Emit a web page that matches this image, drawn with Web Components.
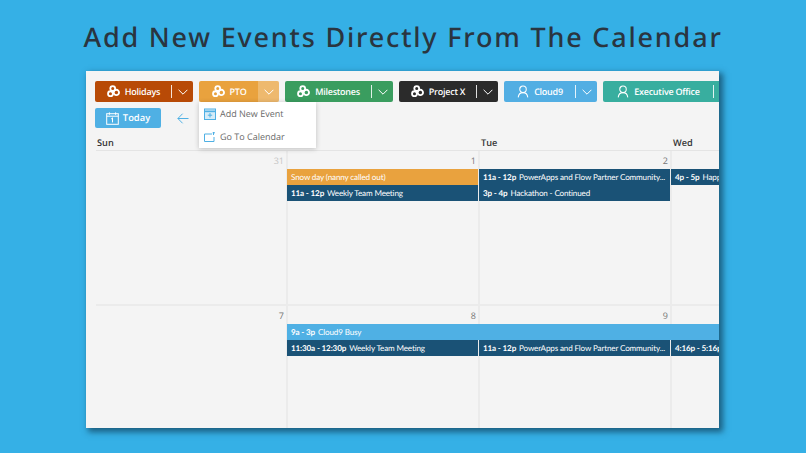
<!DOCTYPE html>
<html>
<head>
<meta charset="utf-8">
<title>Calendar</title>
<style>
  html, body { margin: 0; padding: 0; height: 100%; overflow: hidden; background: #35b0e6; }
  body { font-family: "Open Sans", sans-serif; text-rendering: geometricPrecision; }
</style>
</head>
<body>
<cal-slide heading="Add New Events Directly From The Calendar">
  <cal-toolbar>
    <split-button color="#b84a06" icon="group" style="width:98px" label="Holidays"></split-button>
    <split-button color="#e9a23e" icon="group" style="width:80px" label="PTO" open>
      <action-menu slot="menu">
        <menu-item icon="add">Add New Event</menu-item>
        <menu-item icon="go">Go To Calendar</menu-item>
      </action-menu>
    </split-button>
    <split-button color="#3a9d5f" icon="group" style="width:108px" label="Milestones"></split-button>
    <split-button color="#2b2b2b" icon="group" style="width:99px" label="Project X"></split-button>
    <split-button color="#52aee3" icon="person" style="width:93px" label="Cloud9"></split-button>
    <split-button color="#38ae9f" icon="person" style="width:132px" label="Executive Office"></split-button>
  </cal-toolbar>
  <cal-nav></cal-nav>
  <cal-head></cal-head>
  <cal-week days="31,1,2,">
    <cal-event slot="events" style="grid-column:2;grid-row:1" color="#e9a23e" text="Snow day (nanny called out)"></cal-event>
    <cal-event slot="events" style="grid-column:2;grid-row:2" time="11a - 12p" text="Weekly Team Meeting"></cal-event>
    <cal-event slot="events" style="grid-column:3;grid-row:1" time="11a - 12p" text="PowerApps and Flow Partner Community..."></cal-event>
    <cal-event slot="events" style="grid-column:3;grid-row:2" time="3p - 4p" text="Hackathon - Continued"></cal-event>
    <cal-event slot="events" style="grid-column:4;grid-row:1" time="4p - 5p" text="Happy Hour"></cal-event>
  </cal-week>
  <cal-week days="7,8,9," last>
    <cal-event slot="events" style="grid-column:2 / 5;grid-row:1" color="#4fb0e4" time="9a - 3p" text="Cloud9 Busy"></cal-event>
    <cal-event slot="events" style="grid-column:2;grid-row:2" time="11:30a - 12:30p" text="Weekly Team Meeting"></cal-event>
    <cal-event slot="events" style="grid-column:3;grid-row:2" time="11a - 12p" text="PowerApps and Flow Partner Community..."></cal-event>
    <cal-event slot="events" style="grid-column:4;grid-row:2" time="4:16p - 5:16p" text="Review"></cal-event>
  </cal-week>
</cal-slide>

<script>
const ICONS = {
  group: `<svg width="13" height="13" viewBox="0 0 15 15" fill="none" stroke="currentColor" stroke-width="2.1"><circle cx="6.600" cy="4" r="2.800"/><circle cx="4" cy="10" r="2.800"/><circle cx="10.800" cy="8.600" r="3.100"/></svg>`,
  person: `<svg width="12" height="13" viewBox="0 0 14 15" fill="none" stroke="currentColor" stroke-width="1.200"><circle cx="7" cy="5" r="3.800"/><path d="M1.400 14.400c.4-3.600 2.500-5.600 5.600-5.600s5.200 2 5.600 5.600"/></svg>`,
  chevron: `<svg width="10" height="6" viewBox="0 0 10 6" fill="none" stroke="currentColor" stroke-width="1"><path d="M.6.8 5 5.200 9.400.8"/></svg>`,
  add: `<svg width="12" height="12" viewBox="0 0 12 12" fill="#d6ecf8" stroke="#4fb0e4" stroke-width="1"><rect x=".5" y="1" width="11" height="10.500"/><path d="M.5 3.400h11" stroke-width="1.600"/><path d="M6 5v4.500M3.800 7.200h4.400"/></svg>`,
  go: `<svg width="12" height="12" viewBox="0 0 12 12" fill="none" stroke="#4fb0e4" stroke-width="1"><path d="M8 3H.5v7.500h9.500V6"/><path d="M9.500 1v3M8.600 1.800h2.400"/></svg>`,
  today: `<svg width="13" height="13" viewBox="0 0 13 13" fill="none" stroke="currentColor" stroke-width="1"><rect x=".7" y="1.700" width="11.600" height="10.600"/><path d="M.7 4.200h11.600M3.400.4v2.400M9.600.4v2.400M6.500 5.800v4.600M5.200 7l1.300-1.200"/></svg>`,
  back: `<svg width="12" height="11" viewBox="0 0 12 11" fill="none" stroke="#4fb0e4" stroke-width="1"><path d="M11.500 5.500H.9M5.600.7.900 5.500l4.700 4.800"/></svg>`
};

class CalSlide extends HTMLElement {
  constructor() {
    super();
    this.attachShadow({mode: 'open'}).innerHTML = `<style>
  :host { display: flex; flex-direction: column; width: 806px; height: 453px; align-items: flex-start; }
  h1 { margin: 0; width: 806px; height: 71px; box-sizing: border-box; padding-top: 18px; text-align: center;
       font: 500 27px/38px "Noto Sans", sans-serif; letter-spacing: 1.8px; color: #2a3540; white-space: nowrap; }
  .win { margin-left: 86px; width: 633px; height: 357px; background: #f4f4f4; box-shadow: 3px 3px 6px 1px rgba(15,60,85,.7); }
  .clip { width: 633px; height: 357px; overflow: hidden; }
</style>
<h1></h1>
<div class="win"><div class="clip"><slot></slot></div></div>`;
    this.shadowRoot.querySelector('h1').textContent = this.getAttribute('heading');
  }
}

class CalToolbar extends HTMLElement {
  constructor() {
    super();
    this.attachShadow({mode: 'open'}).innerHTML = `<style>
  :host { display: flex; gap: 6px; padding: 10px 0 0 9px; width: 760px; box-sizing: border-box; position: relative; z-index: 2; }
</style><slot></slot>`;
  }
}

class SplitButton extends HTMLElement {
  constructor() {
    super();
    const open = this.hasAttribute('open');
    this.attachShadow({mode: 'open'}).innerHTML = `<style>
  :host { display: flex; flex: none; position: relative; height: 21px; color: #fff; border-radius: 2px; box-sizing: border-box; font: 600 9px/21px "Open Sans", sans-serif; }
  .main { flex: 1; display: flex; align-items: center; justify-content: center; gap: 5px; min-width: 0; padding-left: 1px; white-space: nowrap; }
  .main span { letter-spacing: -.25px; }
  .main svg { flex: none; }
  .sep { flex: none; width: 1px; height: 13px; background: rgba(255,255,255,.85); align-self: center; }
  .drop { flex: none; width: 21px; display: flex; align-items: center; justify-content: center; border-radius: 0 2px 2px 0; }
  :host([open]) .sep { display: none; }
  :host([open]) .drop { background: rgba(255,255,255,.25); }
  ::slotted(*) { position: absolute; left: 0; top: 21px; letter-spacing: 0; }
</style>
<div class="main">${ICONS[this.getAttribute('icon')]}<span>${this.getAttribute('label')}</span></div>
<div class="sep"></div>
<div class="drop">${ICONS.chevron}</div>
<slot name="menu"></slot>`;
    this.style.background = this.getAttribute('color');
    if (open) this.style.zIndex = 3;
  }
}

class ActionMenu extends HTMLElement {
  constructor() {
    super();
    this.attachShadow({mode: 'open'}).innerHTML = `<style>
  :host { display: block; width: 117px; height: 46px; background: #fff; box-shadow: 0 1px 5px rgba(0,0,0,.22); }
</style><slot></slot>`;
  }
}

class MenuItem extends HTMLElement {
  constructor() {
    super();
    this.attachShadow({mode: 'open'}).innerHTML = `<style>
  :host { display: flex; align-items: center; gap: 4px; height: 23px; padding-left: 5px; color: #6a6a6a; font: 400 9px/23px "Open Sans", sans-serif; white-space: nowrap; }
  svg { flex: none; }
</style>${ICONS[this.getAttribute('icon')]}<slot></slot>`;
  }
}

class CalNav extends HTMLElement {
  constructor() {
    super();
    this.attachShadow({mode: 'open'}).innerHTML = `<style>
  :host { display: flex; align-items: center; height: 20px; margin: 6px 0 0 9px; }
  .today { width: 66px; height: 20px; display: flex; align-items: center; justify-content: center; gap: 4px; background: #4fb0e4; color: #fff; border-radius: 2px; font: 600 9.400px/20px "Open Sans", sans-serif; }
  .back { margin-left: 16px; display: flex; }
</style>
<div class="today">${ICONS.today}<span>Today</span></div>
<div class="back">${ICONS.back}</div>`;
  }
}

class CalHead extends HTMLElement {
  constructor() {
    super();
    this.attachShadow({mode: 'open'}).innerHTML = `<style>
  :host { display: grid; grid-template-columns: 192px 192px 192px 192px; width: 768px; height: 23px; margin-left: 10px; box-sizing: border-box; border-bottom: 1px solid #e4e4e4;
          color: #333; font: 600 9.200px/30px "Open Sans", sans-serif; }
  span { padding-left: 1px; }
</style><span>Sun</span><span></span><span>Tue</span><span>Wed</span>`;
  }
}

class CalWeek extends HTMLElement {
  constructor() {
    super();
    const days = this.getAttribute('days').split(',');
    const cells = days.map((d, i) => `<div class="cell ${d === '31' ? 'dim' : ''}" style="grid-column:${i + 1}">${d}</div>`).join('');
    this.attachShadow({mode: 'open'}).innerHTML = `<style>
  :host { display: block; position: relative; width: 768px; height: 155px; margin-left: 10px; box-sizing: border-box; border-bottom: 2px solid #ebebeb; }
  :host([last]) { height: 130px; border-bottom: 0; }
  .cells, .events { display: grid; grid-template-columns: 192px 192px 192px 192px; }
  .cells { position: absolute; inset: 0; }
  .cell { border-right: 2px solid #ebebeb; text-align: right; padding: 4px 2px 0 0; color: #777; font: 400 9px/12px "Open Sans", sans-serif; }
  .cell:last-child { border-right: 0; }
  .dim { color: #c4c4c4; }
  .events { position: relative; padding-top: 18px; grid-auto-rows: 15px; row-gap: 1px; margin-left: -1px; }
</style>
<div class="cells">${cells}</div>
<div class="events"><slot name="events"></slot></div>`;
  }
}

class CalEvent extends HTMLElement {
  constructor() {
    super();
    const time = this.getAttribute('time');
    this.attachShadow({mode: 'open'}).innerHTML = `<style>
  :host { display: block; height: 15.500px; margin-right: 1px; padding-left: 4px; overflow: hidden; white-space: nowrap; color: #fff; background: #1a5276; font: 400 8.100px/16.500px Lato, sans-serif; letter-spacing: -.15px; }
  b { font-weight: 700; margin-right: 3px; }
</style>${time ? `<b>${time}</b>` : ''}<span>${this.getAttribute('text')}</span>`;
    const color = this.getAttribute('color');
    if (color) this.style.background = color;
  }
}

[['cal-slide', CalSlide], ['cal-toolbar', CalToolbar], ['split-button', SplitButton], ['action-menu', ActionMenu],
 ['menu-item', MenuItem], ['cal-nav', CalNav], ['cal-head', CalHead], ['cal-week', CalWeek], ['cal-event', CalEvent]]
  .forEach(([name, cls]) => customElements.define(name, cls));
</script>
</body>
</html>
